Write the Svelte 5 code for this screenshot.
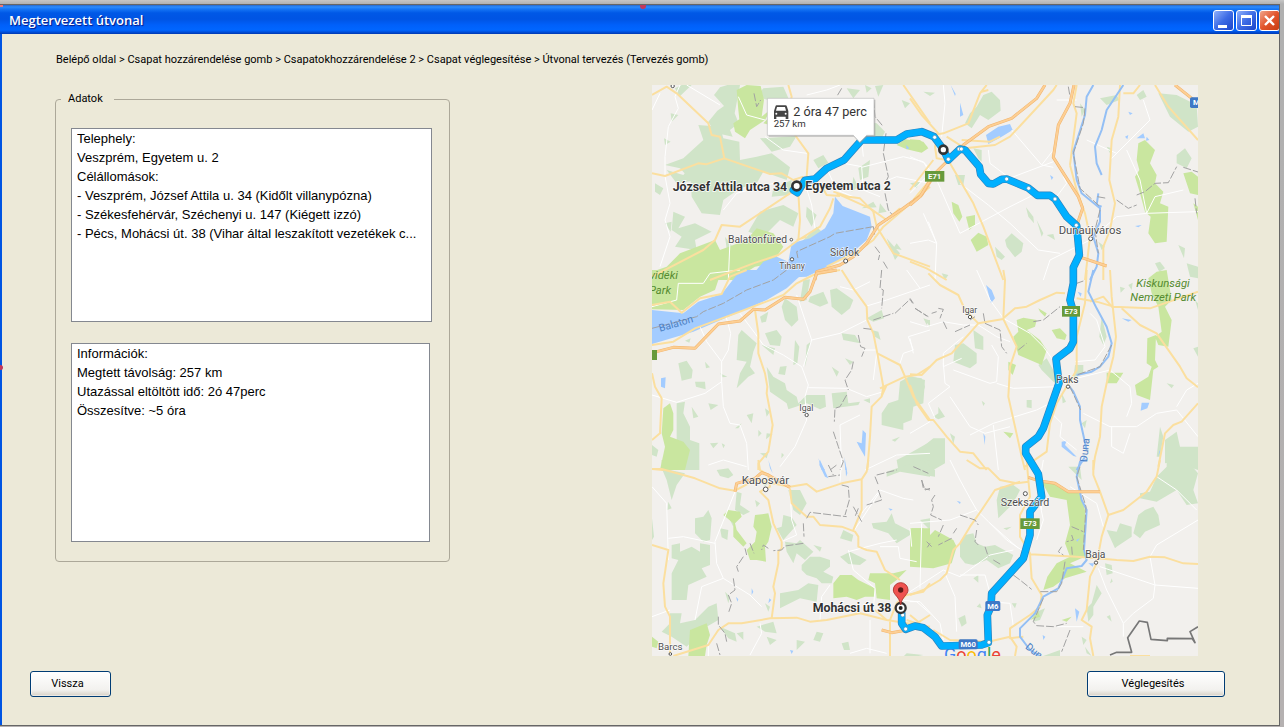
<script>
  const places = [
    'Telephely:',
    'Veszprém, Egyetem u. 2',
    'Célállomások:',
    '- Veszprém, József Attila u. 34 (Kidőlt villanypózna)',
    '- Székesfehérvár, Széchenyi u. 147 (Kiégett izzó)',
    '- Pécs, Mohácsi út. 38 (Vihar által leszakított vezetékek c...'
  ];
  const info = [
    'Információk:',
    'Megtett távolság: 257 km',
    'Utazással eltöltött idő: 2ó 47perc',
    'Összesítve: ~5 óra'
  ];

  // The map is drawn in six tiles; x and y give the origin of each tile.
  const tiles = [
    {
      x: 0, y: 0,
      forest: 'M240 22L262 15 300 15 284 100 296 130 270 150 278 170 225 158 205 125 232 92 252 78 222 45zM175 135L240 140 250 175 298 185 300 240 350 230 395 220 450 262 440 300 370 275 350 310 300 325 250 360 240 405 185 400 155 350 152 300 120 265 75 255 130 235 190 180zM80 270L130 285 150 260 175 300 110 310zM105 25L125 15 155 15 118 50zM92 100L115 105 95 125zM72 175L92 185 75 195zM45 310L70 325 60 345 45 335zM100 395L135 410 115 445 165 430 215 455 165 480 170 510 105 500 125 470 95 450zM75 430L95 425 92 455zM370 25L430 20 450 65 385 60 350 50zM360 175L470 168 450 200 395 215zM400 325L455 300 450 345 395 350zM360 395L430 375 475 400 460 440 420 420 370 470 325 455zM500 380L530 405 515 440 498 410zM520 240L550 225 565 248 535 265zM620 25L660 30 640 55zM675 125L710 130 735 155 725 175 690 165zM705 18L730 15 715 50zM655 265L690 240 685 290 660 300zM640 290L655 320 635 335zM720 370L740 395 715 400zM675 15L695 25 680 38zM740 475L780 520 765 540zM255 470L285 510 262 520zM480 490L530 440 550 460 500 495zM785 60L810 70 795 85zM770 490L785 510 760 505zM665 385L700 365 710 382z',
      park: 'M290 30L320 15 362 18 372 60 365 110 395 85 375 120 330 150 315 175 285 155 280 130 298 118 295 90zM370 130L385 115 390 135zM36 575L80 560 120 520 225 480 240 510 320 480 350 445 400 460 430 500 410 530 430 545 345 560 280 600 36 600zM770 195L795 178 850 185 865 205 845 218 800 208z',
      water: 'M585 350L608 378 690 410 695 440 680 480 635 520 560 560 500 590 280 600 345 575 370 545 410 530 445 545 455 490 510 475 555 445 580 400zM798 195L808 205 800 208z',
      minor: 'M120 15L105 50 115 85 85 140 75 230 75 288 90 370 75 420 90 470 60 560M140 15L240 75M295 50L320 105 375 120M375 170L430 210 500 220M495 310L515 375 525 445M560 265L590 330 640 350M612 250L665 260 670 330 720 350M665 262L790 230 850 245 870 280M665 180L670 230M400 310L290 340 250 390M500 45L560 30 600 15M270 480L265 600M60 40L36 90M745 300L770 290 870 310',
      road: 'M36 45L80 20 110 40 205 130 215 165 240 170 253 235M36 280L75 288 175 250 198 253 253 235 390 282 425 280 460 300 490 290M445 15L455 50 450 70 470 120 465 165 505 220 500 290 540 310 560 345 600 348M465 330L300 440 245 435 225 480 190 510 36 590M475 340L480 420 475 480 415 525 340 550 210 600M475 480L540 440 570 385 580 355M580 335L625 350 660 355 700 395 710 440 760 520 870 560M790 15L870 130M590 340L690 385 740 420 780 385M560 560L660 510 700 480 730 440 870 320M470 480L500 470',
      main: 'M525 600L530 575 600 555 640 530 680 490 715 435 790 385 845 345 880 290',
      border: 'M342 40L350 80 362 60M605 25L590 50M700 60L705 110 730 140M738 160L730 220 745 290 740 300M735 340L745 390 755 402M700 440L585 460 570 470 470 515 475 540M700 440L705 470M705 500L720 520 715 540M730 545L745 570'
    },
    {
      x: 810, y: 0,
      forest: 'M220 45L245 35 270 60 272 92 235 120 210 105 185 145 165 130 180 100 200 80zM40 35L75 38 60 48zM745 40L800 45 860 75 864 140 835 155 780 110zM570 55L620 45 628 60 590 75zM680 45L700 30 710 50 690 60zM135 285L165 285 160 315 145 315zM0 310L30 305 20 325zM285 480L305 460 340 490 335 515 315 532 290 500zM190 205L215 210 215 245 205 235zM255 500L285 530 275 540 260 530zM348 382L370 410 372 430 355 410zM380 420L400 460 395 470zM410 465L430 462 435 480zM800 225L825 205 845 235 830 265 800 250zM735 550L750 545 765 565 748 575zM565 485L585 500 575 510zM805 495L825 505 822 535zM830 550L864 560 864 595 840 590zM510 70L525 90 515 110zM590 200L605 205 600 220z',
      park: 'M685 190L705 180 735 210 720 250 740 285 735 310 760 335 750 370 775 380 770 485 735 490 715 460 722 410 705 395 690 340 675 290 688 270 680 240zM0 178L30 180 52 200 40 212 0 205zM125 365L145 375 157 410 148 425 130 400zM168 410L195 405 195 435 178 450zM182 480L205 458 230 470 235 495 200 515zM820 280L845 275 864 290 864 345 840 340zM850 370L864 380 864 420z',
      water: 'M228 165L265 140 300 132 308 150 275 170 235 192zM122 15L137 42 135 48zM150 68L160 105 150 110zM645 170L655 165 652 178zM680 175L700 160 705 175zM710 170L718 180 708 182zM655 95L668 100 660 105zM675 438L695 435 685 442zM420 285L430 292 425 300z',
      minor: 'M100 15L105 70 95 170M235 210L240 250 300 295M305 150L395 255 430 210M395 255L430 262M150 310L235 375 300 430 385 510 450 520M290 298L430 245M0 340L50 290M0 490L55 480 80 490 40 400M55 425L80 490 75 600M0 230L45 250 80 300 150 460 300 380 380 340M500 60L440 60M530 180L620 220 645 195 720 120 700 60M650 210L690 300 710 400 864 395M710 400L620 410 540 480 420 540 400 600M710 400L735 350 820 330M440 350L470 310 460 290M645 195L600 240',
      road: 'M0 55L35 105 85 160M72 165L100 160 175 130 210 40 230 15M215 35L235 30M85 170L75 200 80 235 110 240M110 170L165 205 255 195 300 170 430 30 440 15M70 240L0 330M120 250L190 370 220 440 280 600M480 255L500 100 490 70 500 15M480 255L500 330 525 400 540 470 525 600M630 15L625 110 605 180 598 300 615 370 600 450 580 500 580 600M735 15L775 80 864 180M640 40L670 40 690 15M0 545L50 565 110 600M155 180L240 185 270 170M10 360L60 300',
      main: 'M405 15L380 55 305 115 235 140 160 195 70 285 30 350 0 375M492 15L480 70 445 135 430 232 505 350 518 385 500 437M515 533L590 558M795 15L864 70',
      river: 'M550 15L530 50 525 105 490 215 500 300 515 340 570 385 570 425 550 470 565 520 560 560 540 600M640 15L590 90 575 150 555 200 560 250 575 285M565 340L560 375 575 380',
      border: 'M475 20L480 50M495 80L525 83M525 85L520 130 490 220 510 325 570 380M562 350L590 355M620 360L655 385 680 375M680 345L705 335 735 310 775 308 800 260M820 262L864 276M855 355L860 400M570 390L555 450 565 520'
    },
    {
      x: 0, y: 570,
      forest: 'M490 30L510 28 500 90 480 95zM435 85L470 110 475 150 455 170 435 150 425 110zM510 80L550 65 565 100 540 110 505 95zM570 60L590 55 640 90 630 115 605 135 575 110zM360 140L385 125 378 155 365 158zM295 195L305 180 350 220 340 245 330 290 345 310 325 320 290 355 300 310 320 275 290 270zM375 190L410 180 425 200 420 228 390 225zM365 225L405 235 400 255zM465 210L478 230 472 280 460 285zM500 225L512 215 495 290zM605 190L645 195 660 220 610 210zM680 145L725 120 732 145 700 155zM695 180L715 185 722 210 705 200zM615 265L640 275 630 285zM575 290L597 305 590 320zM115 280L140 272 158 300 155 325 125 332zM195 275L210 292 198 295zM165 335L195 335 197 358 168 350zM240 310L262 320 248 322zM380 290L400 320 435 340 440 360 470 380 475 400 500 375 555 375 558 410 540 418 500 400 445 418 440 400 390 365zM420 290L440 288 435 315 415 312zM575 370L620 365 625 400 660 395 655 405 580 415zM670 390L690 385 690 400zM780 335L810 318 855 330 850 400 820 410 815 450 790 460 790 480 725 465 725 430 745 400 775 390zM110 400L135 395 130 430 150 470 150 510 178 520 178 600 60 600 110 520zM155 410L175 440 160 445zM205 400L235 405 212 420zM320 435L340 430 335 460zM375 415L390 425 380 440zM210 520L235 518 220 535zM245 520L255 525 250 535zM285 475L305 460 295 475zM355 480L365 490 355 500zM380 490L398 492 378 508zM360 550L385 548 380 565zM425 548L432 555 424 565zM755 510L780 500 765 515zM775 600L770 570 800 555 870 515 870 600zM36 525L55 540 50 560 36 555zM135 212L152 205 148 218zM855 150L870 150 870 170z',
      park: 'M36 0L245 0 225 60 180 80 130 120 36 118zM70 415L90 400 100 430 100 480 90 500 130 515 150 540 135 600 60 600 75 530 65 490z',
      water: 'M36 120L130 130 175 95 245 72 290 15 320 0 500 0 440 55 380 90 300 125 160 185 36 222zM63 325L77 322 75 355 63 350zM650 515L665 520 668 480 678 490 675 560 660 535zM535 565L548 590 555 600 545 600zM612 560L620 600 616 600z',
      minor: 'M180 170L200 215 245 275 265 240 272 190 258 140M245 275L245 335 195 370 110 397 36 375M245 335L250 410 270 460 300 465 320 520 325 600M300 130L345 190 370 225 430 255 485 290 505 345 495 380 500 450 465 530 420 590M470 75L515 210 490 290M515 210L600 190 680 150M505 353L620 355 680 380 730 365M670 240L710 240M680 108L740 90 870 45M800 0L840 55M710 250L700 330M605 600L600 465 660 435M205 585L250 570 320 590M675 600L770 555 870 550M600 50L640 60 690 35M870 180L805 200 820 240 790 250 780 280M36 110L110 90 115 40 190 40 210 10 300 0',
      road: 'M36 105L90 95 125 128 180 85 245 72 270 20 320 0M36 310L45 350 65 385 60 490 36 510M36 225L100 215 165 175 300 125 430 75 470 40 520 15 600 0M345 120L355 190 355 250 375 310 382 350 380 370 398 465 385 545 355 580 355 600M605 0L640 55 680 110 682 150 700 190 712 250 730 350 725 380 695 410 690 500 682 600M712 250L780 285 795 320 820 380 870 450M720 355L795 320 830 315 870 290M36 597L70 600M725 378L740 345',
      main: 'M50 245L100 232 165 235 235 162 300 153 340 118 375 120 435 82 490 88 510 65 530 10 590 0',
      border: 'M36 175L75 165 170 140 190 125 250 100 320 60 400 30 440 0M725 0L720 55 730 60 725 115M700 150L760 130M765 130L810 88 818 100M825 115L865 140M670 175L695 178M655 195L662 230 675 235 665 260M640 275L635 300 615 330 625 360M620 375L600 410 585 415 583 455M580 485L595 530 610 575 600 600M570 600L590 585'
    },
    {
      x: 810, y: 570,
      forest: 'M95 10L115 15 105 30zM135 225L160 220 200 250 200 280 180 295 130 275zM190 180L220 200 220 240 195 235zM40 145L55 150 50 165zM385 285L410 265 435 310 440 345 395 300zM495 285L520 285 520 310 490 325zM350 390L365 390 365 415 350 412zM215 392L225 400 220 408zM0 320L35 325 45 350 35 380 0 405zM70 440L85 430 85 410 105 440 85 448zM120 490L135 500 130 522zM20 545L70 505 105 505 105 580 70 600 0 600zM575 140L590 200 580 225 568 200zM630 50L645 55 632 68zM730 15L760 10 735 30zM855 90L864 100 864 120zM770 340L792 345 785 355zM750 470L760 500 750 560 740 560zM765 510L800 485 810 530 864 530 864 600 790 575 765 580zM850 235L864 230 864 260zM515 460L530 450 525 475zM455 370L468 395 458 400zM655 45L668 38 665 60z',
      park: 'M320 150L340 143 380 150 375 170 350 180 390 210 410 240 395 285 325 255 310 200 325 185zM385 115L410 130 405 140 390 125zM425 180L450 175 470 195 465 210 440 205zM295 275L318 285 308 315 295 300zM590 308L640 308 620 340 590 340zM715 25L740 5 770 0 780 60 785 90 765 110 785 150 775 230 745 225 735 200 755 185 745 110 725 70zM712 205L738 195 735 270 745 290 730 300 720 390 680 375 675 345 715 320 725 290 710 280zM280 485L310 490 300 505z',
      water: 'M228 45L245 60 255 85 243 100 235 70zM220 490L226 500 224 525zM695 398L718 398 712 415 692 422zM455 515L470 512 465 525 500 560 490 558 455 530zM635 145L665 150 655 155zM745 560L748 540 750 545zM503 65L515 70 512 80z',
      minor: 'M0 155L50 170 100 155 160 165 205 165M205 165L260 200 300 215M200 0L240 90 280 145 360 190 400 230 450 300M245 225L265 260 260 335 240 340M100 290L100 250 160 200M100 290L155 265M240 340L130 300M100 280L105 340 120 350 55 400 75 445M260 340L310 355 440 350M180 495L250 460 380 420 430 395M120 380L180 470 225 490 300 470M250 465L265 600M495 275L555 270 585 230 560 150 540 130M500 325L600 300 660 350 665 400 650 440M520 430L600 470 680 470 740 430 800 420 864 500M605 470L605 530 640 550 660 490M800 410L830 360 864 340M430 435L455 460 450 500 500 540M0 205L10 250M0 490L60 455',
      road: 'M55 10L90 45 145 75 165 120 205 160 280 147 285 30 280 0M205 160L125 250 80 270 35 315 0 313M280 145L315 115 350 110 390 90 440 68 465 70M280 147L320 230 300 290 295 380 335 560 345 600M500 85L560 95 610 110 720 115 864 65M635 115L690 165 740 190 810 290 830 325 864 352M530 0L525 100 500 200 500 300 440 400 420 460 410 545 345 590M600 0L605 80 618 200 610 260 590 340 575 410 570 500 555 560 550 600M0 345L20 400 55 450 70 450 110 500 150 545 190 550 230 600M864 400L815 455 790 465 765 490 745 590M540 95L580 80 610 115',
      river: 'M550 0L535 65 560 115 590 170 605 220 595 260 570 290 545 305 500 315M475 345L490 365 510 410 510 450 530 540M525 560L500 600',
      border: 'M0 85L10 100M15 115L50 138M65 130L80 125M85 115L100 118 90 145M100 155L112 180M135 185L180 165M180 150L195 140M220 130L225 160 270 180 275 230 290 250M325 240L350 220M370 155L400 150 450 110M500 40L520 33M605 225L570 290 500 315M480 350L512 420'
    },
    {
      x: 0, y: 1140,
      forest: 'M65 25L135 40 110 75 95 120 80 60zM230 30L265 25 280 45 265 55 240 48zM290 95L305 100 300 135 330 155 310 165 285 150zM355 60L390 65 375 78zM445 90L480 90 500 130 480 165 460 150zM165 175L190 170 205 150 215 175 210 240 190 245 165 220zM85 125L95 145 82 150zM36 175L42 230 36 240zM240 205L265 210 262 240 245 232zM270 180L290 175 280 200zM345 120L360 130 350 142zM430 165L455 172 470 195 430 240 410 205 425 200zM600 235L610 210 640 225 635 245zM695 190L740 185 755 160 765 190 815 215 810 225 770 250 745 220 700 205zM840 180L870 175 870 210zM95 255L120 250 120 275 155 260 180 275 180 250 210 255 210 315 185 325 200 350 145 375 140 420 95 420 95 340 115 300 95 295zM435 245L470 250 480 240 520 275 495 300 470 280 460 310 440 275zM520 255L545 262 540 275zM485 315L510 290 540 290 570 300 570 320 550 335 580 350 575 370 545 370 530 355 500 345 485 330zM600 290L630 275 680 300 660 315 625 312zM420 400L475 390 505 370 535 375 530 425 480 415 420 445zM255 395L270 410 265 430zM375 430L390 440 385 455zM90 460L125 460 120 490 165 480 205 440 230 430 235 480 200 500 160 540 140 560 95 530 65 515 90 490zM290 520L310 515 310 540zM350 500L400 485 410 520 375 515zM380 530L410 540 390 555zM470 540L495 545 470 570zM530 515L550 520 540 545 520 540zM605 550L625 545 630 570 612 570zM740 35L800 15 870 0 870 50 780 35 740 50zM780 600L800 580 850 585zM240 500L285 520 290 545 265 535z',
      park: 'M65 0L115 0 110 30 65 22zM250 165L265 150 300 155 305 170 285 190 290 210 320 250 310 260 280 230 280 190zM345 165L385 160 395 200 385 245 375 260 378 305 350 300 330 300 320 270 345 245 350 215 340 200zM580 370L600 345 635 345 655 360 705 385 705 410 675 410 650 420 620 410 580 415zM690 340L760 340 800 330 770 360 750 375 750 420 710 415 705 370 685 360zM815 205L870 205 870 315 830 320 810 270zM150 510L200 490 210 525 200 555 195 588 145 588zM36 530L55 545 50 565 36 560z',
      water: 'M540 0L565 55 555 50 538 15zM615 0L622 40 618 50zM385 0L398 40 390 25zM288 410L295 418 292 425zM335 385L340 395 335 405zM388 415L394 420 385 430zM745 145L758 148 752 152zM450 570L460 572 455 582z',
      minor: 'M285 95L225 245 230 310 250 355 330 405 365 440M36 80L80 130 85 300M85 235L130 230 225 250M250 355L185 380 165 480M570 375L545 410 540 480M450 90L455 180 470 225 425 245M600 65L605 0M665 160L720 90 790 115 820 120M640 215L720 95M720 260L775 260 780 295 830 305M845 190L840 385M625 270L640 330 705 385 700 450M360 490L365 520 330 585M36 470L90 450M630 580L680 565 740 580M690 480L690 580M780 420L830 425 870 460M625 275L720 250 770 240M205 550L205 590',
      road: 'M36 27L65 27 165 55 240 85 285 92 345 60 450 80 500 72 530 95 605 70 665 58 680 35 685 0M355 0L360 30 385 45 390 80 360 95 385 120 400 190 425 245 425 265 415 275 415 310 400 380 405 400 395 475M450 85L455 130 500 170 520 170 540 195 605 200 645 215 655 230 655 260 680 270 710 275 735 330 780 360M665 60L665 150 640 210M36 255L85 270 70 370 75 440 90 470 90 580M100 588L205 555 235 510 265 490 305 490 390 475 470 473 510 485 560 480 660 460 740 480 870 500M750 588L750 480 770 430 800 405 850 395 870 370M870 465L830 490 800 480M705 450L740 480',
      main: 'M285 95L290 70 345 55 365 38 385 45 410 60 450 82M725 510L755 518 800 510',
      border: 'M565 15L580 45M565 50L600 45M605 75L625 80 628 120 615 165M500 175L510 157 620 170M490 190L492 230M490 250L435 258 425 270 400 272M385 265L370 255 365 270M330 250L342 280M315 265L320 285M310 290L290 320 295 335M280 355L285 390 265 405 275 430 265 460M235 470L235 495 255 520 260 545M230 550L240 585M710 45L770 30M820 20L865 40M845 60L850 85 870 90M705 50L715 75M715 90L725 120 680 135M655 145L645 170M640 140L665 185M870 250L862 262'
    },
    {
      x: 810, y: 1140,
      forest: 'M0 10L35 0 75 30 75 50 40 45 0 25zM270 80L310 75 330 90 320 110 300 140 265 175 260 120zM280 205L305 200 290 210zM150 250L165 225 190 220 200 250 225 260 255 255 310 285 300 310 265 325 230 300 190 315 165 310 150 290zM190 355L205 345 205 368zM145 475L165 465 170 490 155 500zM305 430L320 430 315 445zM475 20L510 20 515 60 500 45zM590 210L620 215 630 190 665 200 665 230 620 260 615 265zM685 165L705 150 730 140 745 165 750 195 705 215 690 235 670 220zM690 100L720 95 740 50 770 20 770 0 830 0 864 40 850 90 864 130 830 135 800 90 740 125 690 115zM585 310L605 315 608 340 590 345zM530 445L545 430 560 375 575 400 550 440 550 465 535 485zM590 470L600 465 605 485zM525 560L530 580 545 588zM515 530L530 540 520 555zM370 460L405 445 390 480 370 485zM400 588L450 570 450 588zM200 440L210 430 215 445zM600 370L605 355 608 365z',
      park: 'M0 205L40 205 60 225 75 210 130 240 140 260 125 310 70 325 0 320zM395 65L435 70 470 95 510 100 525 150 525 290 480 310 530 335 465 355 430 380 400 390 412 350 440 310 480 290 465 250 480 195 470 120 420 110zM455 480L485 470 470 485zM360 480L385 455 390 470z',
      water: 'M140 122L152 126 150 132zM495 445L508 455 500 485zM398 525L406 530 400 540zM535 310L552 310 548 320zM498 240L510 235 502 245z',
      minor: 'M120 0L150 60 180 115 200 150 235 185 325 265M0 190L120 180 200 150M240 190L290 240 350 280M0 205L5 260M235 425L300 430 310 500M310 270L240 285 150 350 100 330 0 395M150 345L225 345 240 400M105 340L135 410 140 515M0 425L30 425 90 490 100 540M565 325L590 390 640 490 670 460 730 415 735 375 570 320M735 375L864 385M720 290L740 255 864 180M720 290L735 375M740 50L800 90 860 150M400 0L390 60 395 150M520 500L440 500M640 490L640 530M385 110L400 180 380 240M480 80L560 130 580 200',
      road: 'M170 0L210 25 235 25 270 60 320 70 355 65M330 65L255 90 215 150 180 200 150 250 130 270 110 340 90 360 40 390 0 405M350 0L355 60 360 110 330 165 330 230 360 280 365 355 395 405 390 440 360 465 300 505 300 535 340 530M360 283L500 290 560 295 620 300 670 303 720 290 765 292 820 310 864 312M550 0L550 45 570 95 595 165 575 230 560 310 540 350 530 450 515 480 545 500 540 535 550 588M595 165L640 150 710 95 740 50 750 0M0 465L30 490M235 545L300 530 320 560 315 588M70 510L120 540 235 545M660 588L720 588',
      main: 'M355 52L385 62 435 70 475 95 570 95',
      river: 'M530 0L510 5 500 50 515 120 530 150 522 270 530 300 515 318 470 325 460 350 445 385 400 410 375 460 330 505 330 530 360 570 390 588',
      border: 'M35 60L45 90 60 85M75 105L65 120 70 140 62 165 95 180M100 195L85 230M125 235L85 255M50 245L65 260M150 165L195 180 205 195M140 205L130 220M200 210L195 245 205 255M225 260L235 290M250 300L275 315M310 345L330 360 365 388M510 20L500 50 528 140 520 270M485 200L520 215M485 225L490 240 470 245M455 260L445 275 460 285M485 260L487 285M465 305L455 370 440 395 390 395M400 415L370 485 380 497 430 500 470 490M480 510L455 575'
    }
  ];

  const layers = ['forest', 'park', 'water', 'minor', 'road'];
  const route =
    'M460 330L472 338 495 301 525 297 560 265 612 240 665 180 770 180 800 162 845 155 882 170 910 208 925 240 960 207 975 210 1018 260 1022 283 1045 310 1060 312 1085 298 1100 297 1165 324 1192 346 1230 346 1245 357 1280 410 1310 437 1318 525 1300 562 1300 610 1290 660 1300 695 1300 785 1290 805 1248 837 1257 910 1210 1045 1195 1070 1157 1100 1157 1120 1195 1182 1205 1250 1170 1295 1170 1365 1150 1435 1055 1540 1053 1580 1042 1605 1045 1688 1025 1695 905 1698 885 1670 850 1643 825 1638 797 1648 785 1630 785 1600';
  const dots = [
    [884, 172], [925, 238], [957, 207], [964, 207], [1100, 297], [1166, 325], [1245, 357], [1309, 436],
    [788, 1605], [797, 1647], [1047, 1687]
  ];
  const towns = [
    [98, 18, 5], [454, 479, 4], [456, 538, 5], [617, 543, 6], [1352, 476, 6], [500, 1005, 5],
    [990, 711, 5], [1284, 920, 5], [377, 1228, 7], [1156, 1241, 6], [1368, 1448, 5], [91, 1722, 4]
  ];
  const labels = [
    ['Balatonfüred', 264, 490, 31], ['Tihany', 418, 567, 26], ['Siófok', 570, 528, 31],
    ['Dunaújváros', 1256, 461, 34], ['Igar', 967, 698, 26], ['Igal', 478, 992, 26],
    ['Paks', 1248, 908, 31], ['Kaposvár', 305, 1211, 34], ['Szekszárd', 1082, 1279, 32],
    ['Baja', 1336, 1433, 31], ['Barcs', 54, 1710, 29]
  ];
  const shields = [
    ['E71', 855, 273, 58, 32, 'e'], ['E73', 1266, 678, 54, 32, 'e'], ['E73', 1141, 1315, 58, 32, 'e'],
    ['M6', 1036, 1563, 45, 30, 'm'], ['M60', 956, 1678, 57, 30, 'm'], ['M', 1650, 52, 38, 32, 'm']
  ];
</script>

<div class="desktop">
  <div class="window">
    <header>
      <h1>Megtervezett útvonal</h1>
      <div class="controls">
        <button class="ctl" aria-label="Kis méret">
          <svg viewBox="0 0 19 19"><path d="M4 14h9v3H4z" fill="#fff" /></svg>
        </button>
        <button class="ctl" aria-label="Teljes méret">
          <svg viewBox="0 0 19 19"><path d="M4.500 5h10v9.500h-10z" fill="none" stroke="#fff" /><path d="M4 4h11v3H4z" fill="#fff" /></svg>
        </button>
        <button class="ctl close" aria-label="Bezárás">
          <svg viewBox="0 0 19 19"><path d="M5 5l9 9M14 5l-9 9" stroke="#fff" stroke-width="2.400" /></svg>
        </button>
      </div>
    </header>

    <main>
      <nav>Belépő oldal &gt; Csapat hozzárendelése gomb &gt; Csapatokhozzárendelése 2 &gt; Csapat véglegesítése &gt; Útvonal tervezés (Tervezés gomb)</nav>

      <div class="columns">
        <fieldset>
          <legend>Adatok</legend>
          <ul class="places">
            {#each places as line}<li>{line}</li>{/each}
          </ul>
          <ul class="info">
            {#each info as line}<li>{line}</li>{/each}
          </ul>
        </fieldset>

        <svg class="map" viewBox="36 15 1638 1713" role="img" aria-label="Útvonal térkép">
          <rect x="36" y="15" width="1638" height="1713" fill="#f2f0ed" />
          {#each layers as layer}
            {#each tiles as t}
              <path class={layer} transform="translate({t.x} {t.y})" d={t[layer]} />
            {/each}
          {/each}
          {#each tiles as t}
            <g transform="translate({t.x} {t.y})">
              <path class="river" d={t.river} />
              <path class="border" d={t.border} />
              <path class="main-edge" d={t.main} />
              <path class="main-road" d={t.main} />
            </g>
          {/each}
          <path class="frontier" d="M1410 1725L1430 1717 1475 1717 1463 1673 1498 1623 1522 1627 1533 1678 1582 1682 1582 1675 1657 1676 1665 1688 1650 1655 1674 1640" />

          <text class="google" x="912" y="1744" fill="#4285f4">G<tspan fill="#ea4335">o</tspan><tspan fill="#fbbc05">o</tspan>g<tspan fill="#34a853">l</tspan><tspan fill="#ea4335">e</tspan></text>
          <path class="route-edge" d={route} />
          <path class="route" d={route} />
          {#each dots as [x, y]}
            <circle cx={x} cy={y} r="6" fill="#fff" stroke="#4a8db5" stroke-width="2" />
          {/each}
          {#each towns as [x, y, r]}
            <circle cx={x} cy={y} {r} fill="#fff" stroke="#555" stroke-width="3" />
          {/each}
          {#each shields as [name, x, y, w, h, kind]}
            <rect class={kind} {x} {y} width={w} height={h} rx={kind === 'm' ? 5 : 0} />
            <text class="shield" x={x + w / 2} y={y + 24}>{name}</text>
          {/each}
          <rect class="e" x="36" y="810" width="15" height="30" />
          {#each labels as [name, x, y, size]}
            <text class="town" {x} {y} font-size={size}>{name}</text>
          {/each}
          <g class="nature">
            <text x="29" y="598">vidéki</text>
            <text x="27" y="641">Park</text>
            <text x="1489" y="621">Kiskunsági</text>
            <text x="1471" y="662">Nemzeti Park</text>
          </g>
          <text class="lake" transform="translate(60 755) rotate(-16)">Balaton</text>
          <text class="lake" transform="translate(1341 1147) rotate(-84)">Duna</text>
          <text class="lake" transform="translate(1154 1704) rotate(38)">Duna</text>

          <g fill="#fff" stroke="#333" stroke-width="8">
            <circle cx="470" cy="318" r="13" />
            <circle cx="910" cy="209" r="12" />
            <circle cx="782" cy="1584" r="15" stroke-width="7" />
          </g>
          <circle cx="782" cy="1584" r="6" fill="#222" />
          <path d="M782 1575C779 1550 760 1545 760 1530a22 22 0 0 1 44 0C804 1545 785 1550 782 1575z" fill="#ef5350" stroke="#b53a35" stroke-width="3" />
          <circle cx="782" cy="1530" r="8" fill="#5c1a17" />
          <g class="stop">
            <text x="98" y="332">József Attila utca 34</text>
            <text x="496" y="330">Egyetem utca 2</text>
            <text x="518" y="1596">Mohácsi út 38</text>
          </g>

          <path class="shadow" d="M386 59H706V170H682L661 190 642 170H386z" />
          <path class="bubble" d="M382 55H702V166H680L659 187 640 166H382z" />
          <g fill="#444">
            <path d="M410 76H436Q440 76 441 80L445 93V117H437V110H409V117H402V93L406 80Q407 76 410 76z" />
            <path d="M411 81H435L438 92H408z" fill="#fff" />
            <circle cx="409" cy="101" r="3" fill="#fff" />
            <circle cx="437" cy="101" r="3" fill="#fff" />
          </g>
          <text class="duration" x="460" y="109">2 óra 47 perc</text>
          <text class="distance" x="401" y="140">257 km</text>
        </svg>
      </div>

      <footer>
        <button class="action back">Vissza</button>
        <button class="action finish">Véglegesítés</button>
      </footer>
    </main>
    <i class="mark top"></i>
    <i class="mark side"></i>
    <i class="mark corner"></i>
  </div>
</div>

<style>
  :global(body) {
    margin: 0;
    background: #b8b8b8;
  }
  .desktop {
    box-sizing: border-box;
    min-height: 100vh;
    padding: 4px 4px 1px 0;
    display: flex;
    background: linear-gradient(#c6c6c6, #b0b0b0 4px, #b5b1b1);
    font: 11px/14px Roboto, Tahoma, sans-serif;
    color: #000;
  }
  .window {
    position: relative;
    flex: 1;
    min-width: 0;
    display: flex;
    flex-direction: column;
    border-top: 1px solid #666;
    border-right: 1px solid #666;
    border-bottom: 1px solid #666;
    background: #ece9d8;
  }
  header {
    display: flex;
    align-items: center;
    justify-content: space-between;
    height: 29px;
    padding-left: 9px;
    overflow: hidden;
    background: linear-gradient(#2a68c8 0, #2b8bff 2px, #1676f5 4px, #0058e6 8px, #0054e3 14px, #0060fa 20px, #0066ff 25px, #0050dc 27px, #0038b0 29px);
  }
  h1 {
    margin: 0;
    font: 600 13px/18px 'Open Sans', 'Trebuchet MS', sans-serif;
    color: #fff;
    text-shadow: 1px 1px 1px #0a1883;
  }
  .controls {
    display: flex;
    gap: 2px;
    margin-right: -1px;
    padding-top: 2px;
  }
  .ctl {
    box-sizing: border-box;
    width: 21px;
    height: 21px;
    padding: 0;
    border: 1px solid #fff;
    border-radius: 3px;
    background: linear-gradient(135deg, #8fb0fb, #3d6be5 50%, #1c45c9);
  }
  .ctl.close {
    background: linear-gradient(135deg, #f0a58c, #e2552c 50%, #c83c10);
  }
  .ctl svg {
    display: block;
    width: 19px;
    height: 19px;
  }
  main {
    flex: 1;
    display: flex;
    flex-direction: column;
    border-left: 2px solid #0054e3;
    padding: 19px 54px 28px 28px;
  }
  nav {
    padding-left: 26px;
  }
  .columns {
    display: flex;
    justify-content: space-between;
    align-items: flex-start;
    gap: 24px;
    padding: 18px 27px 0 25px;
  }
  fieldset {
    box-sizing: border-box;
    flex: 0 1 395px;
    min-width: 0;
    margin: 7px 0 0;
    padding: 22px 17px 19px 15px;
    border: 1px solid #aca899;
    border-radius: 4px;
  }
  legend {
    margin-left: -10px;
    padding: 0 11px 0 7px;
  }
  ul {
    box-sizing: border-box;
    margin: 0;
    padding: 0 5px;
    list-style: none;
    border: 1px solid #848890;
    background: #fff;
    font: 13px/19px 'Liberation Sans', Arial, sans-serif;
  }
  li {
    white-space: nowrap;
    overflow: hidden;
    text-overflow: ellipsis;
  }
  .places {
    min-height: 194px;
  }
  .info {
    min-height: 199px;
    margin: 21px 2px 0 0;
  }
  .map {
    flex: 0 1 546px;
    min-width: 0;
    display: block;
    font-family: Roboto, sans-serif;
  }
  footer {
    display: flex;
    justify-content: space-between;
    margin-top: auto;
  }
  .action {
    height: 26px;
    border: 1px solid #003c74;
    border-radius: 3px;
    background: linear-gradient(#fff, #f2f1ee 75%, #d6d0c5);
    box-shadow: inset 0 0 0 1px #ffffff80;
    font: inherit;
    color: #000;
  }
  .back {
    width: 81px;
    padding: 0 6px 0 0;
  }
  .finish {
    width: 138px;
    padding: 0 6px 0 0;
  }
  .mark {
    position: absolute;
    background: #c2385a;
  }
  .top {
    top: 0;
    left: 50%;
    width: 6px;
    height: 4px;
    border-radius: 0 0 3px 3px;
  }
  .side {
    top: 50%;
    left: 0;
    width: 3px;
    height: 5px;
    border-radius: 0 3px 3px 0;
  }
  .corner {
    top: 0;
    left: 0;
    width: 3px;
    height: 2px;
    background: #e77;
  }

  .forest { fill: #d0e4c8; }
  .park { fill: #c9e69f; }
  .water { fill: #a3ccff; }
  .minor, .road, .main-road, .main-edge, .river, .border, .frontier, .route, .route-edge {
    fill: none;
    stroke-linejoin: round;
  }
  .minor { stroke: #fff; stroke-width: 3; }
  .road { stroke: #fbdf9f; stroke-width: 6; }
  .main-edge { stroke: #f0b36c; stroke-width: 9; }
  .main-road { stroke: #fdcf94; stroke-width: 6; }
  .river { stroke: #93bff5; stroke-width: 6; }
  .border { stroke: #a2a2a2; stroke-width: 3; stroke-dasharray: 24 6; }
  .frontier { stroke: #777; stroke-width: 5; }
  .route-edge { stroke: #2d83bd; stroke-width: 23; stroke-linecap: round; }
  .route { stroke: #00b0ff; stroke-width: 19; stroke-linecap: round; }
  .e { fill: #679a3b; }
  .m { fill: #3e78c6; }
  .shield { fill: #fff; font-size: 23px; font-weight: 700; text-anchor: middle; }
  .town { fill: #4d4d4d; stroke: #fff; stroke-width: 3; paint-order: stroke; }
  .nature text { fill: #558b2f; font-size: 34px; font-style: italic; font-weight: 400; }
  .lake { fill: #4b7fc4; font-size: 31px; }
  .stop text { fill: #333; stroke: #fff; stroke-width: 4; paint-order: stroke; font-size: 37px; font-weight: 700; }
  .shadow { fill: #999; opacity: 0.6; }
  .bubble { fill: #fff; stroke: #bbb; stroke-width: 2; }
  .duration { fill: #333; font-size: 38px; }
  .distance { fill: #333; font-size: 29px; }
  .google { font-size: 54px; }
</style>
